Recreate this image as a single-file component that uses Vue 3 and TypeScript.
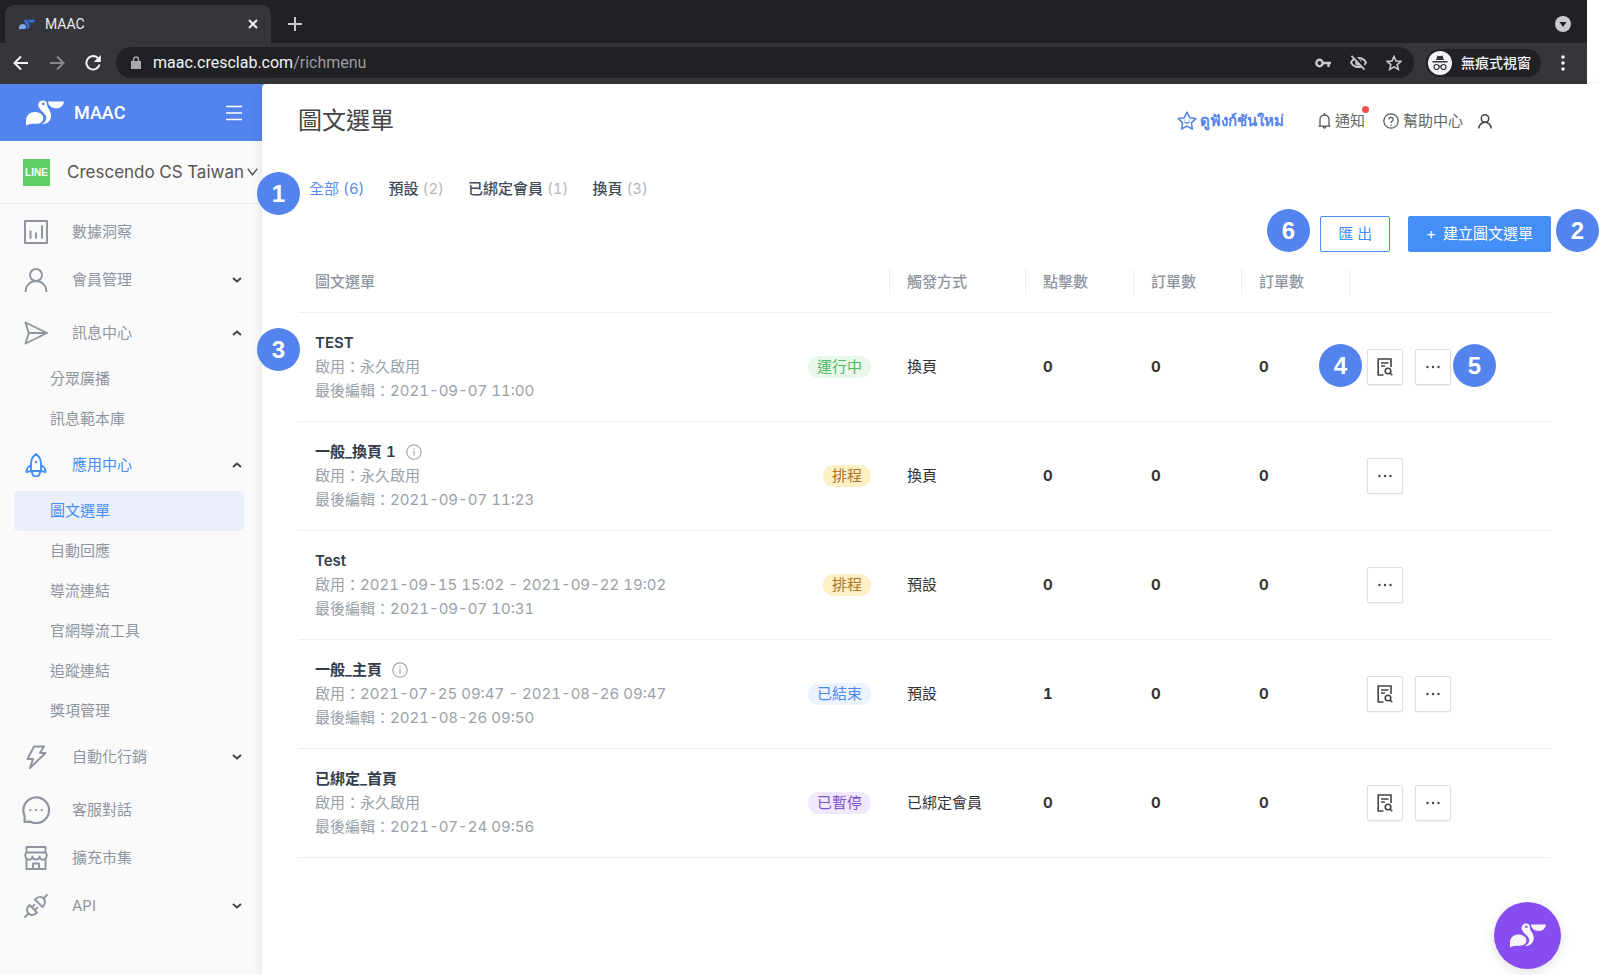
<script setup lang="ts">
import { ref } from 'vue'

type IconName = 'chart' | 'user' | 'send' | 'rocket' | 'bolt' | 'chat' | 'shop' | 'plug'

interface NavItem {
  label: string
  icon: IconName
  arrow?: 'up' | 'down'
  active?: boolean
  children?: string[]
}

interface MenuRow {
  name: string
  info?: boolean
  period: string
  edited: string
  status: string
  tone: 'green' | 'yellow' | 'blue' | 'purple'
  trigger: string
  counts: number[]
  report: boolean
}

const icons: Record<IconName, string> = {
  chart: 'M1 1h22v22H1z M6.5 18.5v-8 M12 18.5v-6 M18 18.5v-13',
  user: 'M12 1a6 6 0 1 0 0 12a6 6 0 1 0 0-12z M1.5 23.5a10.5 10.5 0 0 1 21 0',
  send: 'M1.5 1.5L23 12L1.5 22.5L4.8 12z M4.8 12H23',
  rocket:
    'M12 1C9 3.5 7 6.5 7 10v8h10v-8C17 6.500 15 3.500 12 1z M7 12c-3 1.500-4.500 4-4.500 7L7 18 M17 12c3 1.500 4.500 4 4.500 7L17 18 M8 18c0 4 2 5.500 4 5.500s4-1.500 4-5.500 M12 8.500v1',
  bolt: 'M10 1.500h10l-4 6.500h5.500L6 23l3-9H3.500z',
  chat: 'M2.200 16.800A11 11 0 1 1 7.200 22L2.200 22.200z M7 12h.2 M11.900 12h.2 M16.800 12h.2',
  shop: 'M2.500 1h19v5.500h-19z M2.500 6.500L1.200 8.500c0 6.500 7.200 6.500 7.200 2c0 4 7.200 4 7.200 0c0 4.500 7.200 4.500 7.200-2L21.500 6.500 M2.500 12.500V23h19V12.500 M9 23v-5.500h6V23',
  plug: 'M11 5.500L18.500 13C21 10.500 22 7 19.500 4.500S13.500 3 11 5.500z M5.500 11L13 18.500C10.500 21 7 22 4.500 19.500S3 13.500 5.500 11z M7.800 13.300l2.500-2.500 M10.700 16.200l2.500-2.500 M19.500 4.500L23 1 M4.500 19.500L1 23',
}

const pelican = {
  tail: 'M0 75V60C0 45 12 35 26 35C40 35 51 43 51 53C51 64 42 70 30 70C18 70 8 70 0 75z',
  neck: 'M36 16C36 6 43 1 51 1C58 1 62 6 62 13C62 24 74 31 74 46C74 61 62 71 46 71C55 67 60 60 60 52C60 40 40 32 36 16zM51 7a4 4 0 1 0 0 8a4 4 0 1 0 0-8z',
  beak: 'M65 4H112C110 17 101 24 90 24C76 24 66 17 65 4z',
}

const nav: NavItem[] = [
  { label: '數據洞察', icon: 'chart' },
  { label: '會員管理', icon: 'user', arrow: 'down' },
  { label: '訊息中心', icon: 'send', arrow: 'up', children: ['分眾廣播', '訊息範本庫'] },
  {
    label: '應用中心',
    icon: 'rocket',
    arrow: 'up',
    active: true,
    children: ['圖文選單', '自動回應', '導流連結', '官網導流工具', '追蹤連結', '獎項管理'],
  },
  { label: '自動化行銷', icon: 'bolt', arrow: 'down' },
  { label: '客服對話', icon: 'chat' },
  { label: '擴充市集', icon: 'shop' },
  { label: 'API', icon: 'plug', arrow: 'down' },
]

const tabs = [
  { label: '全部', count: 6 },
  { label: '預設', count: 2 },
  { label: '已綁定會員', count: 1 },
  { label: '換頁', count: 3 },
]

const columns = ['圖文選單', '觸發方式', '點擊數', '訂單數', '訂單數', '']

const rows: MenuRow[] = [
  { name: 'TEST', period: '永久啟用', edited: '2021-09-07 11:00', status: '運行中', tone: 'green', trigger: '換頁', counts: [0, 0, 0], report: true },
  { name: '一般_換頁 1', info: true, period: '永久啟用', edited: '2021-09-07 11:23', status: '排程', tone: 'yellow', trigger: '換頁', counts: [0, 0, 0], report: false },
  { name: 'Test', period: '2021-09-15 15:02 - 2021-09-22 19:02', edited: '2021-09-07 10:31', status: '排程', tone: 'yellow', trigger: '預設', counts: [0, 0, 0], report: false },
  { name: '一般_主頁', info: true, period: '2021-07-25 09:47 - 2021-08-26 09:47', edited: '2021-08-26 09:50', status: '已結束', tone: 'blue', trigger: '預設', counts: [1, 0, 0], report: true },
  { name: '已綁定_首頁', period: '永久啟用', edited: '2021-07-24 09:56', status: '已暫停', tone: 'purple', trigger: '已綁定會員', counts: [0, 0, 0], report: true },
]

const currentTab = ref(0)
const currentPage = ref('圖文選單')
const path = ref('/richmenu')
</script>

<template>
  <div class="screen">
    <header class="chrome">
      <div class="tab-strip">
        <div class="browser-tab">
          <svg class="fav" viewBox="0 0 112 76" aria-hidden="true">
            <path :d="pelican.tail" fill="#7fa6f5" />
            <path :d="pelican.neck" fill="#3f74e8" />
            <path :d="pelican.beak" fill="#3f74e8" />
          </svg>
          <span class="tab-title">MAAC</span>
          <button type="button" class="bare" aria-label="關閉分頁">
            <svg width="10" height="10" viewBox="0 0 10 10"><path d="M1 1l8 8M9 1L1 9" stroke="#f1f3f4" stroke-width="2" /></svg>
          </button>
        </div>
        <button type="button" class="bare new-tab" aria-label="新增分頁">
          <svg width="14" height="14" viewBox="0 0 14 14"><path d="M7 0v14M0 7h14" stroke="#c8cacd" stroke-width="2" /></svg>
        </button>
        <button type="button" class="bare tab-search" aria-label="搜尋分頁">
          <svg width="16" height="16" viewBox="0 0 16 16"><circle cx="8" cy="8" r="8" fill="#c8cacd" /><path d="M4.500 6h7L8 11z" fill="#202124" /></svg>
        </button>
      </div>
      <div class="toolbar">
        <button type="button" class="bare" aria-label="上一頁">
          <svg width="16" height="16" viewBox="0 0 16 16"><path d="M15 8H2M8 1.500L1.500 8L8 14.500" fill="none" stroke="#f1f3f4" stroke-width="2" /></svg>
        </button>
        <button type="button" class="bare" aria-label="下一頁">
          <svg width="16" height="16" viewBox="0 0 16 16"><path d="M1 8h13M8 1.500L14.500 8L8 14.500" fill="none" stroke="#85878a" stroke-width="2" /></svg>
        </button>
        <button type="button" class="bare" aria-label="重新載入">
          <svg width="16" height="16" viewBox="0 0 16 16"><path d="M13 3.200A6.700 6.700 0 1 0 14.600 9.500" fill="none" stroke="#f1f3f4" stroke-width="2" /><path d="M15.800 0v7H8.800z" fill="#f1f3f4" /></svg>
        </button>
        <div class="address">
          <svg width="10" height="13" viewBox="0 0 10 13" aria-hidden="true"><path d="M0 5h10v8H0z" fill="#a6a8ab" /><path d="M2.500 5V3.500a2.500 2.500 0 0 1 5 0V5" fill="none" stroke="#a6a8ab" stroke-width="1.500" /></svg>
          <label class="host" for="address">maac.cresclab.com</label>
          <input id="address" v-model="path" type="text" />
          <button type="button" class="bare" aria-label="密碼">
            <svg width="16" height="10" viewBox="0 0 16 10"><circle cx="4.500" cy="5" r="3.200" fill="none" stroke="#c8cacd" stroke-width="2.400" /><path d="M8 5h8M13.500 5v4" stroke="#c8cacd" stroke-width="2.400" /></svg>
          </button>
          <button type="button" class="bare" aria-label="已封鎖 Cookie">
            <svg width="17" height="15" viewBox="0 0 17 15" fill="none" stroke="#c8cacd" stroke-width="1.800"><path d="M1 7.500C4 1.500 13 1.500 16 7.500C13 13.500 4 13.500 1 7.500z" /><circle cx="8.500" cy="7.500" r="2.400" fill="#c8cacd" /><path d="M3 0L16 14" stroke="#202124" stroke-width="3" /><path d="M1.500 .8L14.500 14.500" /></svg>
          </button>
          <button type="button" class="bare" aria-label="加入書籤">
            <svg width="16" height="16" viewBox="0 0 16 16" fill="none" stroke="#c8cacd" stroke-width="1.600"><path d="M8 1.500l2 4.500l4.900.4l-3.700 3.200l1.100 4.800L8 11.900l-4.300 2.500l1.100-4.800L1.100 6.400L6 6z" /></svg>
          </button>
        </div>
        <button type="button" class="incognito">
          <svg width="24" height="24" viewBox="0 0 24 24" aria-hidden="true"><circle cx="12" cy="12" r="12" fill="#f1f3f4" /><path d="M8 9l1.500-4.500l2.500.8l2.500-.8L16 9zM4.500 10h15v1.500h-15z" fill="#35363a" /><g fill="none" stroke="#35363a" stroke-width="1.200"><circle cx="8.500" cy="16" r="2.500" /><circle cx="15.500" cy="16" r="2.500" /><path d="M11 15.500q1-.8 2 0" /></g></svg>
          無痕式視窗
        </button>
        <button type="button" class="bare" aria-label="更多">
          <svg width="4" height="16" viewBox="0 0 4 16" fill="#f1f3f4"><circle cx="2" cy="2" r="1.800" /><circle cx="2" cy="8" r="1.800" /><circle cx="2" cy="14" r="1.800" /></svg>
        </button>
      </div>
    </header>

    <div class="app">
      <aside class="sidebar">
        <div class="brand">
          <svg class="logo" viewBox="0 0 112 76" fill="#fff" fill-rule="evenodd" aria-hidden="true">
            <path v-for="(d, part) in pelican" :key="part" :d="d" />
          </svg>
          <span>MAAC</span>
          <button type="button" class="bare" aria-label="收合選單">
            <svg width="16" height="16" viewBox="0 0 16 16"><path d="M0 1.500h16M0 8h16M0 14.500h16" stroke="#fff" stroke-width="1.600" /></svg>
          </button>
        </div>
        <button type="button" class="workspace">
          <span class="line-mark">LINE</span>
          <span class="workspace-name">Crescendo CS Taiwan</span>
          <svg width="11" height="8" viewBox="0 0 11 8"><path d="M.8 .8L5.500 6.800L10.200 .8" fill="none" stroke="#555" stroke-width="1.400" /></svg>
        </button>
        <nav>
          <div v-for="item in nav" :key="item.label" class="group" :class="{ folded: item.arrow === 'down' }">
            <button type="button" class="nav-item" :class="{ active: item.active }">
              <svg class="nav-icon" :class="item.icon" viewBox="0 0 24 24" aria-hidden="true"><path :d="icons[item.icon]" /></svg>
              <span>{{ item.label }}</span>
              <svg v-if="item.arrow" class="arrow" viewBox="0 0 10 6"><path :d="item.arrow === 'down' ? 'M1 1l4 3.500L9 1' : 'M1 5l4-3.500L9 5'" /></svg>
            </button>
            <div v-if="item.children" class="children">
              <a
                v-for="child in item.children"
                :key="child"
                href="#"
                :class="{ current: child === currentPage }"
                @click.prevent="currentPage = child"
              >{{ child }}</a>
            </div>
          </div>
        </nav>
      </aside>

      <main class="content">
        <div class="title-bar">
          <h1>圖文選單</h1>
          <a href="#" class="whats-new">
            <svg width="20" height="20" viewBox="0 0 20 20" fill="none" stroke="#5383ec" stroke-width="1.500" stroke-linejoin="round"><path d="M10 1.200l2.700 5.500l6.100.9l-4.400 4.300l1 6.100L10 15.100L4.600 18l1-6.100L1.200 7.600l6.100-.9z" /><path d="M7.500 11q2.500 2.400 5 0M7.500 8.800v.6M12.500 8.800v.6" stroke-width="1.200" /></svg>
            ดูฟังก์ชันใหม่
          </a>
          <a href="#" class="top-link notice">
            <svg width="13" height="16" viewBox="0 0 13 16" fill="none" stroke="#555" stroke-width="1.300"><path d="M6.500 0v1.500M.5 13.200h12M2 13V6.500a4.500 4.500 0 0 1 9 0V13M5 13.500a1.500 1.500 0 0 0 3 0" /></svg>
            通知
            <span class="dot"></span>
          </a>
          <a href="#" class="top-link help">
            <svg width="16" height="16" viewBox="0 0 16 16" fill="none" stroke="#555" stroke-width="1.200"><circle cx="8" cy="8" r="7.200" /><path d="M5.800 6.400a2.200 2 0 1 1 3.300 1.700Q8 8.700 8 10M8 11.200v1.200" /></svg>
            幫助中心
          </a>
          <button type="button" class="bare profile" aria-label="帳號">
            <svg width="14" height="15" viewBox="0 0 14 15" fill="none" stroke="#444" stroke-width="1.500"><circle cx="7" cy="4.500" r="3.700" /><path d="M.8 14.500a6.200 6.200 0 0 1 12.400 0" /></svg>
          </button>
        </div>

        <div class="tabs">
          <span class="marker before-tabs">1</span>
          <button
            v-for="(tab, i) in tabs"
            :key="tab.label"
            type="button"
            :class="{ selected: i === currentTab }"
            @click="currentTab = i"
          >{{ tab.label }} <span>({{ tab.count }})</span></button>
        </div>

        <div class="actions">
          <span class="marker before-export">6</span>
          <button type="button" class="export">匯 出</button>
          <button type="button" class="create"><span class="plus">+</span>建立圖文選單</button>
          <span class="marker after-create">2</span>
        </div>

        <table>
          <colgroup>
            <col />
            <col class="col-trigger" />
            <col class="col-count" />
            <col class="col-count" />
            <col class="col-count" />
            <col class="col-tools" />
          </colgroup>
          <thead>
            <tr>
              <th v-for="(column, i) in columns" :key="i" scope="col"><span>{{ column }}</span></th>
            </tr>
          </thead>
          <tbody>
            <tr v-for="(row, i) in rows" :key="row.name">
              <td>
                <div class="summary">
                  <span v-if="i === 0" class="marker before-row">3</span>
                  <div>
                    <strong>{{ row.name }}<svg v-if="row.info" width="16" height="16" viewBox="0 0 16 16" fill="none" stroke="#a5a9b0" stroke-width="1.200"><circle cx="8" cy="8" r="7.200" /><path d="M8 4.300v1.200M8 6.800v5" /></svg></strong>
                    <p>啟用：{{ row.period }}</p>
                    <p>最後編輯：{{ row.edited }}</p>
                  </div>
                  <span class="status" :class="row.tone">{{ row.status }}</span>
                </div>
              </td>
              <td>{{ row.trigger }}</td>
              <td v-for="(count, c) in row.counts" :key="c" class="count">{{ count }}</td>
              <td>
                <div class="tools">
                  <span v-if="i === 0" class="marker before-tools">4</span>
                  <button v-if="row.report" type="button" aria-label="檢視報表">
                    <svg width="16" height="18" viewBox="0 0 16 18" fill="none" stroke="#444" stroke-width="1.600"><path d="M6.500 17H1.200V1H14v8M4 5h7.500M4 8h4" /><circle cx="11" cy="13" r="2.800" /><path d="M13 15l2.300 2.300" /></svg>
                  </button>
                  <button type="button" aria-label="更多操作">
                    <svg width="16" height="4" viewBox="0 0 16 4" fill="#444"><circle cx="2.500" cy="2" r="1.200" /><circle cx="8" cy="2" r="1.200" /><circle cx="13.500" cy="2" r="1.200" /></svg>
                  </button>
                  <span v-if="i === 0" class="marker after-tools">5</span>
                </div>
              </td>
            </tr>
          </tbody>
        </table>
      </main>
    </div>

    <button type="button" class="chat-launcher" aria-label="線上客服">
      <svg width="36" height="25" viewBox="0 0 112 76" fill="#f7f7fb" fill-rule="evenodd">
        <path v-for="(d, part) in pelican" :key="part" :d="d" />
      </svg>
    </button>
  </div>
</template>

<style>
html,
body {
  margin: 0;
  background: #fff;
}
</style>

<style scoped>
* {
  box-sizing: border-box;
}

.screen {
  display: flex;
  flex-direction: column;
  min-height: 100vh;
  font-family: Inter, 'Noto Sans CJK TC', sans-serif;
  font-size: 15px;
  font-variant-numeric: tabular-nums;
  line-height: 24px;
  color: #333;
}

button,
input {
  font: inherit;
  font-variant-numeric: inherit;
  color: inherit;
}

button {
  cursor: pointer;
}

a {
  text-decoration: none;
}

svg {
  display: block;
  flex: none;
}

.bare {
  display: block;
  flex: none;
  padding: 0;
  border: 0;
  background: none;
}

/* Browser window */
.chrome {
  margin-right: 13px;
  background: #35363a;
  font-family: Roboto, 'Noto Sans CJK TC', sans-serif;
}

.tab-strip {
  display: flex;
  align-items: center;
  height: 43px;
  padding: 5px 16px 0 5px;
  background: #202124;
}

.browser-tab {
  display: flex;
  align-items: center;
  width: 266px;
  height: 38px;
  padding: 0 13px 0 14px;
  border-radius: 9px 9px 0 0;
  background: #35363a;
}

.fav {
  width: 16px;
  height: 11px;
}

.tab-title {
  flex: 1;
  margin-left: 10px;
  font-size: 14px;
  color: #e8eaed;
}

.new-tab {
  margin-left: 17px;
}

.tab-search {
  margin-left: auto;
}

.toolbar {
  display: flex;
  align-items: center;
  height: 41px;
  gap: 20px;
  padding: 0 22px 2px 13px;
}

.address {
  display: flex;
  flex: 1;
  align-items: center;
  height: 31px;
  margin: 0 -8px 0 -5px;
  padding: 0 12px 0 15px;
  border-radius: 16px;
  background: #202124;
}

.address .bare {
  margin-left: 19px;
}

.host {
  margin-left: 12px;
  font-size: 16px;
  color: #f1f3f4;
}

.address input {
  flex: 1;
  min-width: 0;
  padding: 0;
  border: 0;
  outline: 0;
  background: none;
  font-size: 16px;
  color: #9a9ca0;
}

.incognito {
  display: flex;
  align-items: center;
  gap: 9px;
  height: 28px;
  padding: 0 10px 0 2px;
  border: 0;
  border-radius: 14px;
  background: #202124;
  font-size: 14px;
  font-weight: 500;
  color: #f1f3f4;
}

/* Application shell */
.app {
  display: flex;
  flex: 1;
  background: #5383ec;
}

.sidebar {
  display: flex;
  flex: none;
  flex-direction: column;
  width: 262px;
  background: #fafafa;
}

.brand {
  display: flex;
  align-items: center;
  height: 57px;
  padding: 0 20px 0 26px;
  background: #5383ec;
  font-family: Roboto, sans-serif;
  font-size: 18px;
  font-weight: 500;
  color: #fff;
}

.brand span {
  flex: 1;
  margin-left: 10px;
}

.logo {
  width: 38px;
  height: 26px;
}

.workspace {
  display: flex;
  align-items: center;
  height: 63px;
  padding: 0 4px 0 23px;
  border: 0;
  border-bottom: 1px solid #e8e8e8;
  background: none;
  font-size: 17px;
  color: #555;
}

.line-mark {
  width: 27px;
  height: 27px;
  background: #5fce64;
  font-family: 'Liberation Sans', sans-serif;
  font-size: 10px;
  font-weight: 700;
  line-height: 27px;
  text-align: center;
  color: #fff;
}

.workspace-name {
  flex: 1;
  margin-left: 17px;
  text-align: left;
  white-space: nowrap;
}

nav {
  padding-top: 4px;
}

.folded {
  margin-bottom: 5px;
}

.nav-item {
  display: flex;
  align-items: center;
  width: 100%;
  height: 48px;
  padding: 0 20px 0 24px;
  border: 0;
  background: none;
  text-align: left;
  color: #8e95a0;
}

.nav-item span {
  flex: 1;
  margin-left: 24px;
}

.nav-item.active {
  color: #448ef7;
}

.nav-icon {
  width: 24px;
  height: 24px;
  fill: none;
  stroke: currentColor;
  stroke-width: 1.900;
  stroke-linecap: round;
  stroke-linejoin: round;
}

.nav-icon.chart {
  stroke-width: 2;
  stroke-linecap: butt;
}

.nav-icon.chat {
  width: 28px;
  height: 28px;
  margin: 0 -2px;
}

.arrow {
  width: 10px;
  height: 6px;
  fill: none;
  stroke: #444;
  stroke-width: 2;
}

.children {
  padding: 2px 18px 2px 14px;
}

.children a {
  display: block;
  padding-left: 36px;
  border-radius: 4px;
  line-height: 40px;
  color: #8e95a0;
}

.children a.current {
  background: #ebeff9;
  color: #448ef7;
}

.content {
  position: relative;
  flex: 1;
  min-width: 0;
  padding: 0 49px 40px 36px;
  border-top-left-radius: 4px;
  background: #fff;
  box-shadow: -2px 0 10px rgba(0, 0, 0, 0.08);
}

.title-bar {
  display: flex;
  align-items: center;
  height: 74px;
  padding-right: 59px;
}

h1 {
  flex: 1;
  margin: 0;
  font-size: 24px;
  font-weight: 400;
  color: #444;
}

.whats-new {
  display: flex;
  align-items: center;
  gap: 3px;
  font-weight: 700;
  color: #5383ec;
}

.top-link {
  position: relative;
  display: flex;
  align-items: center;
  gap: 4px;
  color: #666;
}

.notice {
  margin-left: 34px;
}

.dot {
  position: absolute;
  top: -3px;
  right: -4px;
  width: 7px;
  height: 7px;
  border-radius: 50%;
  background: #f0524f;
}

.help {
  margin-left: 18px;
}

.profile {
  margin-left: 15px;
}

.tabs {
  position: relative;
  display: flex;
  gap: 24px;
  height: 58px;
  padding: 19px 0 0 11px;
}

.tabs button {
  height: 24px;
  padding: 0;
  border: 0;
  background: none;
  font-weight: 500;
  color: #414b5a;
}

.tabs button span {
  font-weight: 400;
  color: #b4b8c0;
}

.tabs .selected,
.tabs .selected span {
  font-weight: 400;
  color: #5c8df0;
}

.actions {
  position: relative;
  display: flex;
  justify-content: flex-end;
  gap: 18px;
}

.actions button {
  height: 36px;
  border: 1px solid #448ef7;
  border-radius: 2px;
}

.export {
  padding: 0 17px;
  background: #fff;
  color: #448ef7;
}

.create {
  display: flex;
  align-items: center;
  gap: 7px;
  padding: 0 17px;
  background: #448ef7;
  color: #fff;
}

.marker {
  position: absolute;
  z-index: 1;
  width: 43px;
  height: 43px;
  border-radius: 50%;
  background: #5383ec;
  font-family: 'Liberation Sans', sans-serif;
  font-size: 24px;
  font-weight: 700;
  line-height: 43px;
  text-align: center;
  color: #fff;
}

.before-tabs {
  top: 14px;
  left: -41px;
}

.before-export {
  top: -7px;
  right: 241px;
}

.after-create {
  top: -7px;
  right: -48px;
}

.before-row {
  top: -3px;
  left: -58px;
}

.before-tools {
  top: -5px;
  left: -48px;
}

.after-tools {
  top: -5px;
  left: 86px;
}

/* Table */
table {
  width: 100%;
  border-collapse: separate;
  border-spacing: 0;
  table-layout: fixed;
}

.col-trigger {
  width: 136px;
}

.col-count {
  width: 108px;
}

.col-tools {
  width: 202px;
}

th {
  height: 61px;
  padding: 0;
  border-bottom: 1px solid #eee;
  font-weight: 500;
  text-align: left;
  color: #8e95a0;
}

th span {
  display: block;
  height: 26px;
  padding-left: 17px;
  line-height: 26px;
}

th + th span {
  border-left: 1px solid #eee;
}

td {
  height: 109px;
  padding: 0 18px;
  border-bottom: 1px solid #eee;
}

td:first-child {
  padding-left: 17px;
}

.summary {
  position: relative;
  display: flex;
  align-items: center;
  justify-content: space-between;
}

.summary strong {
  display: flex;
  align-items: center;
  gap: 10px;
  font-weight: 600;
  line-height: 24px;
  color: #333d4b;
}

.summary p {
  margin: 0;
  color: #9a9fa8;
}

.status {
  padding: 0 9px;
  border-radius: 12px;
  line-height: 22px;
}

.green {
  background: #e8f8ea;
  color: #55b765;
}

.yellow {
  background: #fdf0c4;
  color: #b0742a;
}

.blue {
  background: #ebf3fe;
  color: #5088f0;
}

.purple {
  background: #f1e8fd;
  color: #7c55cc;
}

.count {
  font-weight: 700;
}

.tools {
  position: relative;
  display: flex;
  gap: 12px;
}

.tools button {
  display: flex;
  align-items: center;
  justify-content: center;
  width: 36px;
  height: 36px;
  padding: 0;
  border: 1px solid #dfdfdf;
  border-radius: 2px;
  background: #fff;
  box-shadow: 0 1px 2px rgba(0, 0, 0, 0.06);
}

.chat-launcher {
  position: fixed;
  right: 39px;
  bottom: 6px;
  display: flex;
  align-items: center;
  justify-content: center;
  width: 67px;
  height: 67px;
  padding: 0;
  border: 0;
  border-radius: 50%;
  background: #884df0;
  box-shadow: 0 3px 12px rgba(0, 0, 0, 0.12);
}
</style>
